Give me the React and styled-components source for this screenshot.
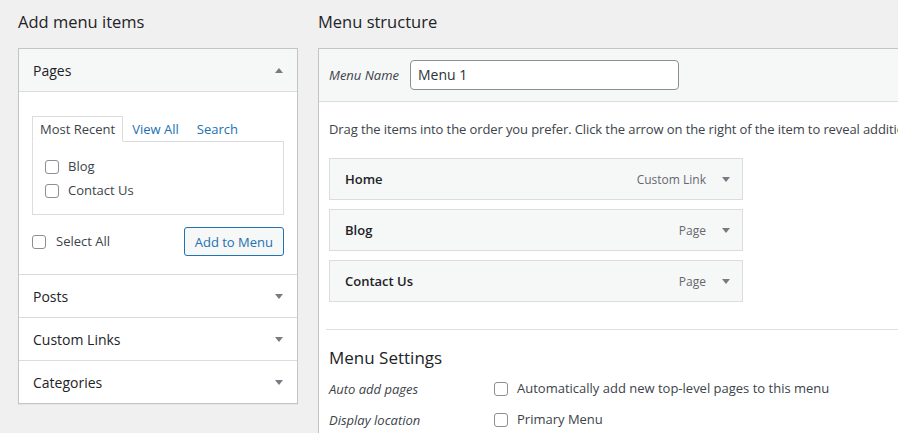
import React from 'react';
import styled, { createGlobalStyle } from 'styled-components';

const GlobalStyle = createGlobalStyle`
  html, body {
    margin: 0;
    padding: 0;
    background: #f0f0f1;
    overflow: hidden;
  }
  body {
    font-family: "Open Sans", "Noto Sans", sans-serif;
    font-size: 13px;
    color: #3c434a;
  }
`;

const Page = styled.div`
  display: flex;
  gap: 20px;
  padding: 11px 0 0 18px;
  width: 1200px;
`;

const Column = styled.div`
  display: flex;
  flex-direction: column;
  width: ${props => props.width}px;
  flex-shrink: 0;
`;

const Heading = styled.h2`
  margin: 0 0 15px;
  font-size: 16.5px;
  line-height: 22px;
  font-weight: 400;
  color: #1d2327;
`;

const Box = styled.div`
  background: #fff;
  border: 1px solid #c3c4c7;
  box-shadow: 0 1px 1px rgba(0, 0, 0, 0.04);
`;

const SectionHead = styled.div`
  display: flex;
  align-items: center;
  justify-content: space-between;
  height: 42px;
  padding: 0 14px;
  font-size: 14px;
  color: #1d2327;
  background: ${props => props.open ? '#f6f7f7' : '#fff'};
  border-top: ${props => props.first ? 'none' : '1px solid #dcdcde'};
  border-bottom: ${props => props.open ? '1px solid #dcdcde' : 'none'};
`;

const Arrow = styled.span`
  width: 0;
  height: 0;
  border-left: 4px solid transparent;
  border-right: 4px solid transparent;
  ${props => props.up
    ? 'border-bottom: 5px solid #787c82;'
    : 'border-top: 5px solid #787c82;'}
`;

const SectionBody = styled.div`
  padding: 24px 13px 18px 13px;
`;

const Tabs = styled.div`
  display: flex;
  align-items: flex-end;
`;

const Tab = styled.span`
  height: 24px;
  line-height: 24px;
  padding: 0 ${props => props.active ? 7 : 8}px;
  margin-bottom: -1px;
  background: ${props => props.active ? '#fff' : 'transparent'};
  border: 1px solid ${props => props.active ? '#dcdcde' : 'transparent'};
  border-bottom-color: ${props => props.active ? '#fff' : 'transparent'};
  color: ${props => props.active ? '#3c434a' : '#2271b1'};
  position: relative;
  z-index: 1;
`;

const TabPanel = styled.div`
  border: 1px solid #dcdcde;
  padding: 16px 12px 15px;
  display: flex;
  flex-direction: column;
  gap: 7px;
`;

const CheckRow = styled.label`
  display: flex;
  align-items: center;
  gap: ${props => props.gap || 9}px;
  line-height: 17px;
`;

const Check = styled.span`
  display: inline-block;
  width: 12px;
  height: 12px;
  border: 1px solid #8c8f94;
  border-radius: 3px;
  background: #fff;
  flex-shrink: 0;
`;

const PanelFooter = styled.div`
  display: flex;
  align-items: center;
  justify-content: space-between;
  margin-top: 12px;
`;

const Button = styled.button`
  font: inherit;
  font-size: 13px;
  height: 29px;
  padding: 0 10px;
  color: #2271b1;
  background: #f6f7f7;
  border: 1px solid #2271b1;
  border-radius: 3px;
`;

const MenuHead = styled.div`
  display: flex;
  align-items: center;
  gap: 11px;
  height: 52px;
  padding: 0 10px;
  background: #f6f7f7;
  border-bottom: 1px solid #dcdcde;
`;

const Italic = styled.span`
  font-style: italic;
  color: #3c434a;
  width: ${props => props.width ? props.width + 'px' : 'auto'};
  flex-shrink: 0;
`;

const NameInput = styled.div`
  width: 253px;
  height: 28px;
  line-height: 28px;
  padding: 0 7px;
  background: #fff;
  border: 1px solid #8c8f94;
  border-radius: 4px;
  font-size: 14px;
  color: #2c3338;
`;

const MenuBody = styled.div`
  padding: 18px 10px 0;
`;

const Hint = styled.p`
  margin: 0 0 20px;
  white-space: nowrap;
  line-height: 18px;
  letter-spacing: -0.1px;
`;

const ItemList = styled.div`
  display: flex;
  flex-direction: column;
  gap: 9px;
  width: 414px;
`;

const Item = styled.div`
  display: flex;
  align-items: center;
  height: 40px;
  padding: 0 12px 0 15px;
  background: #f6f7f7;
  border: 1px solid #dcdcde;
`;

const ItemTitle = styled.span`
  flex: 1;
  font-weight: 600;
  color: #1d2327;
`;

const ItemType = styled.span`
  color: #646970;
  font-size: 12px;
  margin-right: 16px;
`;

const Settings = styled.div`
  margin: 27px 0 0 -3px;
  padding: 16px 0 0 3px;
  border-top: 1px solid #e0e0e0;
`;

const SubHeading = styled.h3`
  margin: 0 0 3px;
  font-size: 17px;
  line-height: 24px;
  font-weight: 400;
  color: #1d2327;
`;

const SettingRow = styled.div`
  display: flex;
  align-items: center;
  height: 31px;
`;

const items = [
  { title: 'Home', type: 'Custom Link' },
  { title: 'Blog', type: 'Page' },
  { title: 'Contact Us', type: 'Page' },
];

export default function App() {
  return (
    <>
      <GlobalStyle />
      <Page>
        <Column width={280}>
          <Heading>Add menu items</Heading>
          <Box>
            <SectionHead first open>
              Pages
              <Arrow up />
            </SectionHead>
            <SectionBody>
              <Tabs>
                <Tab active>Most Recent</Tab>
                <Tab>View All</Tab>
                <Tab>Search</Tab>
              </Tabs>
              <TabPanel>
                <CheckRow><Check />Blog</CheckRow>
                <CheckRow><Check />Contact Us</CheckRow>
              </TabPanel>
              <PanelFooter>
                <CheckRow gap={10}><Check />Select All</CheckRow>
                <Button>Add to Menu</Button>
              </PanelFooter>
            </SectionBody>
            {['Posts', 'Custom Links', 'Categories'].map(name => (
              <SectionHead key={name}>
                {name}
                <Arrow />
              </SectionHead>
            ))}
          </Box>
        </Column>
        <Column width={700}>
          <Heading>Menu structure</Heading>
          <Box>
            <MenuHead>
              <Italic>Menu Name</Italic>
              <NameInput>Menu 1</NameInput>
            </MenuHead>
            <MenuBody>
              <Hint>Drag the items into the order you prefer. Click the arrow on the right of the item to reveal additional configuration options.</Hint>
              <ItemList>
                {items.map(item => (
                  <Item key={item.title}>
                    <ItemTitle>{item.title}</ItemTitle>
                    <ItemType>{item.type}</ItemType>
                    <Arrow />
                  </Item>
                ))}
              </ItemList>
              <Settings>
                <SubHeading>Menu Settings</SubHeading>
                <SettingRow>
                  <Italic width={165}>Auto add pages</Italic>
                  <CheckRow><Check />Automatically add new top-level pages to this menu</CheckRow>
                </SettingRow>
                <SettingRow>
                  <Italic width={165}>Display location</Italic>
                  <CheckRow><Check />Primary Menu</CheckRow>
                </SettingRow>
              </Settings>
            </MenuBody>
          </Box>
        </Column>
      </Page>
    </>
  );
}
